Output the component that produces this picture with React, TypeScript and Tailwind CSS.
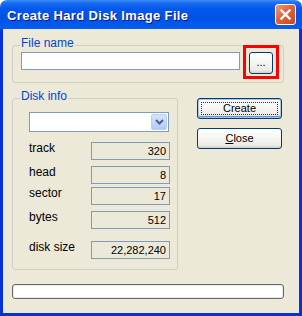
import React from "react";

const GroupBox: React.FC<{ label: string; className?: string; children?: React.ReactNode }> = ({
  label,
  className = "",
  children,
}) => (
  <div className={`flex flex-col border border-[#d0d0bf] rounded-[3px] ${className}`}>
    <div className="-mt-[9px] ml-[7px] px-[1px] w-fit bg-[#ece9d8] text-[12px] leading-[13px] text-[#0046d5]">
      {label}
    </div>
    {children}
  </div>
);

const XpButton: React.FC<{ isDefault?: boolean; className?: string; children?: React.ReactNode }> = ({
  isDefault,
  className = "",
  children,
}) => (
  <div
    className={`flex items-center justify-center border border-[#003c74] rounded-[3px] bg-[linear-gradient(to_bottom,#ffffff_0%,#f7f7f4_40%,#ecebe6_85%,#d6d0c5_100%)] ${
      isDefault ? "shadow-[inset_0_0_0_1px_#a9c4ee,inset_0_-1px_0_1px_#6f8fd8]" : ""
    } ${className}`}
  >
    {children}
  </div>
);

const InfoRow: React.FC<{ label: string; value: string; className?: string }> = ({ label, value, className = "" }) => (
  <div className={`flex items-start ml-[16px] ${className}`}>
    <div className="w-[62px] text-[12px] leading-[12px]">{label}</div>
    <div className="w-[79px] h-[18px] border border-[#7f9db9] bg-[#ece9d8] text-right pr-[3px] text-[11px] leading-[16px]">
      {value}
    </div>
  </div>
);

export default function App() {
  return (
    <div className="w-[302px] h-[316px] flex flex-col bg-white font-['Liberation_Sans',Arial,sans-serif] text-[11px] text-black select-none">
      {/* title bar */}
      <div className="h-[29px] shrink-0 flex items-center pl-[7px] pr-[6px] rounded-t-[7px] bg-[linear-gradient(to_bottom,#3d8ff5_0%,#1d6df0_10%,#0058ee_30%,#0054e3_60%,#0058ee_85%,#0a5fe8_100%)]">
        <div className="flex-1 pt-[1px] text-white font-bold text-[13px] leading-[15px] tracking-[0.35px] [text-shadow:1px_1px_#0a1883]">
          Create Hard Disk Image File
        </div>
        <div className="w-[21px] h-[21px] flex items-center justify-center rounded-[3px] border border-white bg-[linear-gradient(135deg,#ee9a7c_0%,#e0633c_45%,#c9461d_100%)]">
          <svg width="13" height="13" viewBox="0 0 13 13">
            <path d="M2.5 2.5 L10.5 10.5 M10.5 2.5 L2.5 10.5" stroke="#ffffff" strokeWidth="2.4" strokeLinecap="square" />
          </svg>
        </div>
      </div>

      {/* client area */}
      <div className="flex-1 flex flex-col bg-[#ece9d8] border-x-[3px] border-b-[3px] border-[#0831d9] pl-[9px]">
        <GroupBox label="File name" className="mt-[16px] w-[272px] h-[38px]">
          <div className="flex items-start">
            <div className="ml-[8px] mt-[2px] w-[219px] h-[18px] border border-[#7f9db9] bg-white" />
            <div className="ml-[3px] -mt-[5px] w-[36px] h-[34px] border-[3px] border-[#ff0000]">
              <XpButton className="ml-[3px] mt-[4px] w-[24px] h-[22px]">
                <span className="text-[11px] leading-[11px] -mt-[2px]">...</span>
              </XpButton>
            </div>
          </div>
        </GroupBox>

        <div className="flex items-start mt-[15px]">
          <GroupBox label="Disk info" className="w-[166px] h-[172px]">
            <div className="ml-[16px] mt-[9px] w-[140px] h-[20px] border border-[#7f9db9] bg-white flex justify-end p-[1px]">
              <div className="w-[16px] h-[16px] rounded-[2px] border border-[#b9cdf6] bg-[linear-gradient(to_bottom,#d7e3fd_0%,#c2d4fc_60%,#b3c8fa_100%)] flex items-center justify-center">
                <svg width="9" height="6" viewBox="0 0 9 6">
                  <path d="M1 1 L4.5 4.5 L8 1" stroke="#4d6185" strokeWidth="2" fill="none" />
                </svg>
              </div>
            </div>
            <InfoRow label="track" value="320" className="mt-[10px]" />
            <InfoRow label="head" value="8" className="mt-[6px]" />
            <InfoRow label="sector" value="17" className="mt-[3px]" />
            <InfoRow label="bytes" value="512" className="mt-[6px]" />
            <InfoRow label="disk size" value="22,282,240" className="mt-[12px]" />
          </GroupBox>

          <div className="ml-[19px] flex flex-col gap-[9px]">
            <XpButton isDefault className="w-[85px] h-[21px] p-[3px]">
              <div className="w-full h-full border border-dotted border-[#333] flex items-center justify-center text-[11px] leading-[11px]">
                Create
              </div>
            </XpButton>
            <XpButton className="w-[85px] h-[21px]">
              <span className="text-[11px] leading-[11px]">
                <span className="underline">C</span>lose
              </span>
            </XpButton>
          </div>
        </div>

        <div className="mt-[14px] w-[272px] h-[15px] rounded-[3px] border border-[#686868] bg-white shadow-[inset_0_0_0_1px_#e8e8e8]" />
      </div>
    </div>
  );
}
